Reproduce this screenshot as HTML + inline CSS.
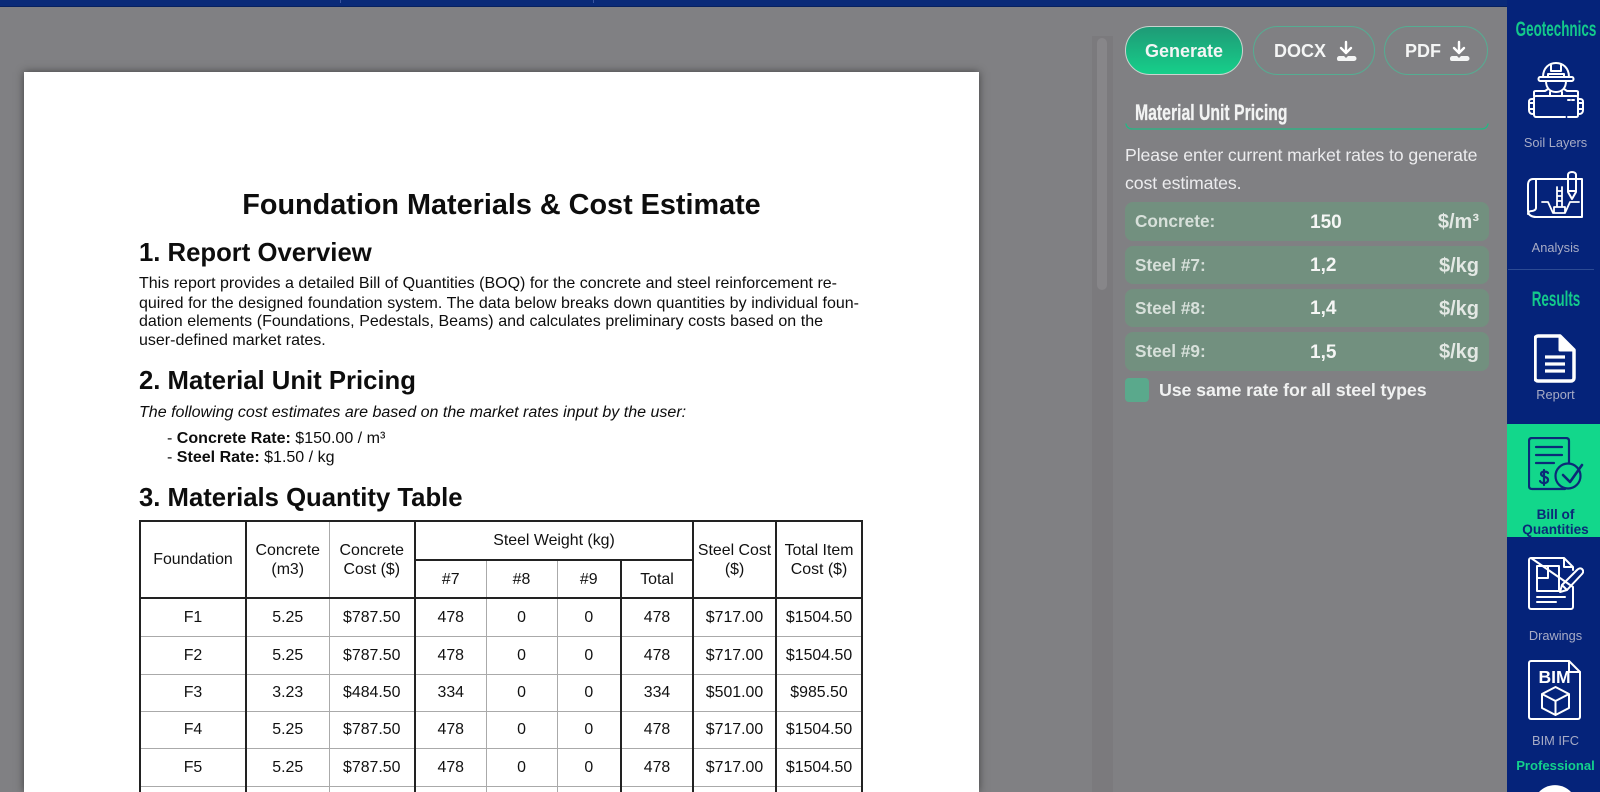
<!DOCTYPE html>
<html lang="en"><head><meta charset="utf-8"><title>Bill of Quantities</title>
<style>
*{box-sizing:border-box;margin:0;padding:0}
html,body{width:1600px;height:792px;overflow:hidden;background:#808083;font-family:"Liberation Sans",sans-serif}
#wrap{position:relative;width:1600px;height:792px;overflow:hidden;background:#808083}
.a{position:absolute;white-space:nowrap}
#top{left:0;top:0;width:1600px;height:7px;background:#0a2a78;border-bottom:1px solid #062060}
#page{left:24px;top:72px;width:955px;height:720px;background:#fff;box-shadow:0 0 8px rgba(30,30,30,.65)}
.doc{color:#0d0d0d}
.h2{left:139px;font-weight:700;font-size:25.7px;line-height:30px}
.p{left:139px;width:698px;font-size:16px;line-height:18px;text-align:justify;text-align-last:justify}
table{position:absolute;left:139px;top:520px;width:722px;border-collapse:collapse;table-layout:fixed;font-size:15.9px;color:#111;text-align:center;line-height:19px}
td,th{font-weight:400;border:1px solid #aaa;padding:0;vertical-align:middle}
.t{border-top:2px solid #222}.b{border-bottom:2px solid #222}.l{border-left:2px solid #222}.r{border-right:2px solid #222}
tr.e td{height:6px;font-size:0;line-height:0;border-bottom:none}
.btn{top:26px;height:49px;border-radius:25px;color:#f4f5f5;font-weight:700;font-size:18px;line-height:48px;text-align:center}
.row{left:1125px;width:364px;background:#72907f;border-radius:8px}
.row b{position:absolute;top:0}
.row .n{left:10px;color:#d7e0da;font-size:17.2px}
.row .v{left:185px;top:1px;color:#f5f6f5;font-size:19px}
.row .u{right:10px;top:1px;color:#e3e8e4;font-size:20px}
#side{left:1507px;top:0;width:93px;height:792px;background:#05237a}
.lab{width:93px;left:1509px;text-align:center;color:#a8acc6;font-size:12.8px;line-height:16px}
.hd{left:1456px;width:200px;text-align:center;color:#13c98b;font-weight:700;font-size:21px;line-height:24px;transform:scaleX(.64);transform-origin:50% 0}
svg{position:absolute;fill:none;stroke:#fff;stroke-width:2;stroke-linejoin:round;stroke-linecap:round}
</style></head><body><div id="wrap">
<div class="a" id="top"></div>
<div class="a" style="left:340px;top:0;width:1px;height:3px;background:#3a55a0"></div>
<div class="a" style="left:593px;top:0;width:1px;height:3px;background:#3a55a0"></div>
<div class="a" style="left:1092px;top:36px;width:21px;height:756px;background:#7b7a7d"></div>
<div class="a" style="left:1097px;top:38px;width:10px;height:252px;background:#878689;border-radius:5px"></div>

<div class="a" id="page"></div>
<div class="a doc" style="left:24px;width:955px;top:188px;text-align:center;font-weight:700;font-size:28.8px;line-height:34px">Foundation Materials &amp; Cost Estimate</div>
<div class="a doc h2" style="top:238px">1. Report Overview</div>
<div class="a doc p" style="top:275px">This report provides a detailed Bill of Quantities (BOQ) for the concrete and steel reinforcement re-</div>
<div class="a doc p" style="top:295px;width:720px">quired for the designed foundation system. The data below breaks down quantities by individual foun-</div>
<div class="a doc p" style="top:313px;width:684px">dation elements (Foundations, Pedestals, Beams) and calculates preliminary costs based on the</div>
<div class="a doc p" style="top:332px;text-align-last:left">user-defined market rates.</div>
<div class="a doc h2" style="top:366px">2. Material Unit Pricing</div>
<div class="a doc" style="left:139px;top:403px;font-size:16.05px;line-height:18px;font-style:italic">The following cost estimates are based on the market rates input by the user:</div>
<div class="a doc" style="left:167px;top:429px;font-size:16.05px;line-height:18px">- <b>Concrete Rate:</b> $150.00 / m³</div>
<div class="a doc" style="left:167px;top:448px;font-size:16.05px;line-height:18px">- <b>Steel Rate:</b> $1.50 / kg</div>
<div class="a doc h2" style="top:483px">3. Materials Quantity Table</div>

<table>
<colgroup><col style="width:106px"><col style="width:83px"><col style="width:86px"><col style="width:71px"><col style="width:71px"><col style="width:64px"><col style="width:72px"><col style="width:83px"><col style="width:86px"></colgroup>
<tr style="height:39px"><th rowspan="2" class="t b l r">Foundation</th><th rowspan="2" class="t b">Concrete<br>(m3)</th><th rowspan="2" class="t b r">Concrete<br>Cost ($)</th><th colspan="4" class="t b r">Steel Weight (kg)</th><th rowspan="2" class="t b r">Steel Cost<br>($)</th><th rowspan="2" class="t b r">Total Item<br>Cost ($)</th></tr>
<tr style="height:38px"><th class="b">#7</th><th class="b">#8</th><th class="b">#9</th><th class="b r l">Total</th></tr>
<tr style="height:38px"><td class="l r">F1</td><td>5.25</td><td class="r">$787.50</td><td>478</td><td>0</td><td>0</td><td class="l r">478</td><td class="r">$717.00</td><td class="r">$1504.50</td></tr>
<tr style="height:38px"><td class="l r">F2</td><td>5.25</td><td class="r">$787.50</td><td>478</td><td>0</td><td>0</td><td class="l r">478</td><td class="r">$717.00</td><td class="r">$1504.50</td></tr>
<tr style="height:37px"><td class="l r">F3</td><td>3.23</td><td class="r">$484.50</td><td>334</td><td>0</td><td>0</td><td class="l r">334</td><td class="r">$501.00</td><td class="r">$985.50</td></tr>
<tr style="height:37px"><td class="l r">F4</td><td>5.25</td><td class="r">$787.50</td><td>478</td><td>0</td><td>0</td><td class="l r">478</td><td class="r">$717.00</td><td class="r">$1504.50</td></tr>
<tr style="height:38px"><td class="l r">F5</td><td>5.25</td><td class="r">$787.50</td><td>478</td><td>0</td><td>0</td><td class="l r">478</td><td class="r">$717.00</td><td class="r">$1504.50</td></tr>
<tr class="e"><td class="l r"></td><td></td><td class="r"></td><td></td><td></td><td></td><td class="l r"></td><td class="r"></td><td class="r"></td></tr>
</table>

<div class="a btn" style="left:1125px;width:118px;background:linear-gradient(180deg,#1f9a76,#16cf8a);border:1px solid #c9d4cf">Generate</div>
<div class="a btn" style="left:1253px;width:122px;border:1px solid #55ad92;padding-right:28px">DOCX</div>
<div class="a btn" style="left:1384px;width:104px;border:1px solid #55ad92;padding-right:26px">PDF</div>
<svg style="left:1335px;top:40px" width="22" height="22" viewBox="0 0 22 22"><path d="M11 2v10M6 8l5 5 5-5" stroke-width="2.4"/><path d="M2 19a2.500 2.500 0 0 1 2-3h5l2 2 2-2h6a2 2 0 0 1 0 5H4a2 2 0 0 1-2-2z" fill="#f4f5f5" stroke="none"/></svg>
<svg style="left:1448px;top:40px" width="22" height="22" viewBox="0 0 22 22"><path d="M11 2v10M6 8l5 5 5-5" stroke-width="2.4"/><path d="M2 19a2.500 2.500 0 0 1 2-3h5l2 2 2-2h6a2 2 0 0 1 0 5H4a2 2 0 0 1-2-2z" fill="#f4f5f5" stroke="none"/></svg>

<div class="a" style="left:1135px;top:100px;font-weight:700;font-size:22px;line-height:26px;color:#f2f3f3;transform:scaleX(.717);transform-origin:0 0;-webkit-text-stroke:.3px #f2f3f3">Material Unit Pricing</div>
<svg style="left:1125px;top:122px" width="364" height="8" viewBox="0 0 364 8"><path d="M1 2q1 5 7 5h348q6 0 7-5" stroke="#22b985" stroke-width="1.300"/></svg>
<div class="a" style="left:1125px;top:141px;font-size:17.700px;line-height:28px;color:#ececee;white-space:normal;width:364px;letter-spacing:-.1px">Please enter current market rates to generate cost estimates.</div>

<div class="a row" style="top:202px;height:39px;line-height:39px"><b class="n">Concrete:</b><b class="v">150</b><b class="u">$/m³</b></div>
<div class="a row" style="top:246px;height:38px;line-height:38px"><b class="n">Steel #7:</b><b class="v">1,2</b><b class="u">$/kg</b></div>
<div class="a row" style="top:289px;height:38px;line-height:38px"><b class="n">Steel #8:</b><b class="v">1,4</b><b class="u">$/kg</b></div>
<div class="a row" style="top:332px;height:39px;line-height:39px"><b class="n">Steel #9:</b><b class="v">1,5</b><b class="u">$/kg</b></div>
<div class="a" style="left:1125px;top:378px;width:24px;height:24px;border-radius:4px;background:#5aa98c"></div>
<div class="a" style="left:1159px;top:378px;font-size:17.800px;line-height:24px;font-weight:700;color:#f0f1f1;letter-spacing:-.1px">Use same rate for all steel types</div>

<div class="a" id="side"></div>
<div class="a hd" style="top:18px">Geotechnics</div>
<svg style="left:1528px;top:62px" width="56" height="58" viewBox="0 0 56 58">
<path d="M15 15C15 6 21 1 28 1s13 5 13 14M23 2v7h10V2M20 15v-3h16v3"/>
<path d="M12 15h32c2 0 2 4 0 4H12c-2 0-2-4 0-4z"/>
<path d="M18 19c0 7 4 11 10 11s10-4 10-11"/>
<path d="M6 34v-4c0-1 1-1 2-1h9l3-2M50 34v-4c0-1-1-1-2-1h-9l-3-2M22 33v-3M34 33v-3"/>
<path d="M37 55H8c-1 0-2-1-2-2V36c0-1 0-2 2-2h40c2 0 2 1 2 2v17c0 2-1 2-2 2h-8M40 38h2M44 38h2"/>
<path d="M6 37H4c-3 0-3 2-3 3v8c0 2 1 4 4 4h1M50 37h2c3 0 3 2 3 3v8c0 2-1 4-4 4h-1M2 41h4M2 47h4M50 41h4M50 47h4"/></svg>
<div class="a lab" style="top:135px">Soil Layers</div>
<svg style="left:1527px;top:171px" width="57" height="50" viewBox="0 0 57 50">
<path d="M1 14c0-4 2-6 5-6h34M50 8h5v38H9c-4 0-8-2-8-6V14M9 8v29c0 2-3 3-4 3s-4 0-4 3"/>
<path d="M41 4c0-4 8-4 8 0v17l-4 7-4-7zM41 8h8M41 20h8"/>
<path d="M15 31h6l5 11h12l5-11h9M27 42v-6h11v6M30 36V16M35 36V16M30 20h5M30 25h5M30 30h5" stroke-width="1.800"/></svg>
<div class="a lab" style="top:240px">Analysis</div>
<div class="a" style="left:1508px;top:269px;width:86px;height:1px;background:#2c4a93"></div>
<div class="a hd" style="top:288px">Results</div>
<svg style="left:1534px;top:334px" width="42" height="50" viewBox="0 0 42 50"><path d="M4 2h22l14 14v28a3 3 0 0 1-3 3H4a3 3 0 0 1-3-3V5a3 3 0 0 1 3-3z" stroke-width="3.500"/><path d="M26 2v14h14z" fill="#fff" stroke-width="3"/><path d="M11 23h20M11 30h20M11 37h20" stroke-width="3.200" stroke-linecap="butt"/></svg>
<div class="a lab" style="top:387px">Report</div>
<div class="a" style="left:1507px;top:424px;width:93px;height:113px;background:#12d78b"></div>
<svg style="left:1528px;top:437px;stroke:#0b2a78" width="56" height="55" viewBox="0 0 56 55"><path d="M41 26V4c0-2-1-3-3-3H4C2 1 1 2 1 4v45c0 2 1 3 3 3h33" stroke-width="2.200"/><path d="M8 10h26M8 18h26M8 26h18" stroke-width="2.200"/><path d="M20 36c-1-2-7-2-7 1s7 2 7 6-7 4-8 1M16 33v15" stroke-width="2.200"/><circle cx="40" cy="39" r="12.500" stroke-width="2.200"/><path d="M35 38l7 7 12-17" stroke-width="2.600"/></svg>
<div class="a lab" style="top:507px;color:#0b2a78;font-weight:700;font-size:13.6px;line-height:15px">Bill of<br>Quantities</div>
<svg style="left:1528px;top:557px" width="56" height="54" viewBox="0 0 56 54"><path d="M3 1h33l9 9v3M45 30v20a2 2 0 0 1-2 2H3a2 2 0 0 1-2-2V3a2 2 0 0 1 2-2zM36 1v9h9"/><path d="M9 9h22v25H9zM9 21h11V9M9 40h28M9 45h19"/><path d="M32 35l2-7L49 13c2-2 4-2 5-1s2 3 0 5L39 33zM34 28l5 5"/></svg>
<div class="a lab" style="top:628px">Drawings</div>
<svg style="left:1528px;top:659px" width="54" height="62" viewBox="0 0 54 62"><path d="M3 2h38l11 11v45a2 2 0 0 1-2 2H3a2 2 0 0 1-2-2V4a2 2 0 0 1 2-2z"/><path d="M41 2v11h11"/><path d="M27.500 28l13.500 7v14l-13.500 7-13.500-7V35zM14 35l13.500 7 13.500-7M27.500 42v14"/></svg>
<div class="a" style="left:1508px;width:93px;top:667px;text-align:center;color:#fff;font-weight:700;font-size:17.500px;line-height:20px">BIM</div>
<div class="a lab" style="top:733px">BIM IFC</div>
<div class="a lab" style="top:758px;color:#13d08c;font-weight:700;font-size:13.100px">Professional</div>
<svg style="left:1539px;top:785px;stroke:none" width="32" height="7" viewBox="0 0 32 7"><path d="M0 7A22 22 0 0 1 32 7z" fill="#fff" stroke="none"/></svg>
</div></body></html>
